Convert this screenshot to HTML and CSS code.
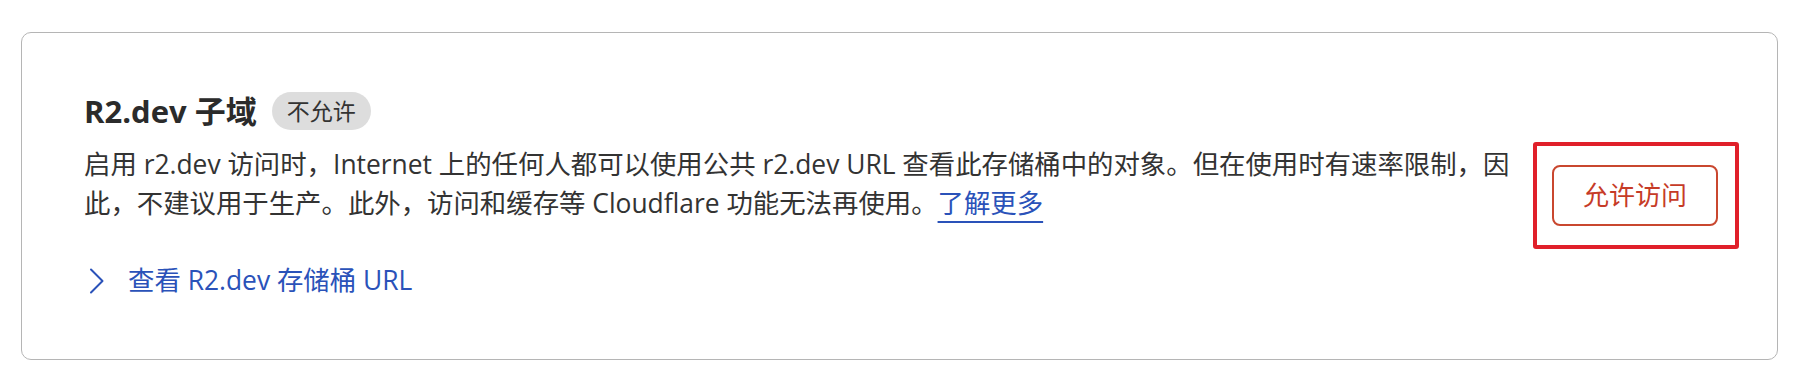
FILE: index.html
```html
<!DOCTYPE html>
<html lang="zh-CN">
<head>
<meta charset="utf-8">
<title>R2.dev 子域</title>
<link rel="stylesheet" href="styles.css">
</head>
<body>
<div class="page">
  <section class="card">
    <div class="info">
      <div class="title-row">
        <h2 class="title">R2.dev 子域</h2>
        <span class="badge">不允许</span>
      </div>
      <p class="desc">启用 r2.dev 访问时，Internet 上的任何人都可以使用公共 r2.dev URL 查看此存储桶中的对象。但在使用时有速率限制，因此，不建议用于生产。此外，访问和缓存等 Cloudflare 功能无法再使用。<a class="learn" href="#">了解更多</a></p>
      <a class="expander" href="#">
        <svg class="chev" width="18" height="26" viewBox="0 0 18 26" aria-hidden="true"><path d="M3 1.5 L14.5 13 L3 24.5" fill="none" stroke="currentColor" stroke-width="2" stroke-linecap="round" stroke-linejoin="round"/></svg>
        <span>查看 R2.dev 存储桶 URL</span>
      </a>
    </div>
    <div class="highlight">
      <button class="allow-btn" type="button">允许访问</button>
    </div>
  </section>
</div>
</body>
</html>
```
FILE: styles.css
```css
html, body {
  margin: 0;
  padding: 0;
  background: #ffffff;
}

body {
  font-family: "Open Sans", "Noto Sans CJK SC", sans-serif;
  color: #333333;
}

.page {
  padding: 32px 21px 0 21px;
}

.card {
  display: flex;
  align-items: center;
  gap: 12px;
  border: 1px solid #b5b5b5;
  border-radius: 10px;
  padding: 58px 38px 59px 62px;
  background: #ffffff;
}

.info {
  flex: 1;
  min-width: 0;
}

.title-row {
  display: flex;
  align-items: center;
  gap: 15px;
  height: 40px;
}

.title {
  margin: 0;
  font-size: 31px;
  line-height: 40px;
  font-weight: 700;
  color: #2b2b2b;
}

.badge {
  display: inline-block;
  background: #dddddd;
  color: #333333;
  font-size: 23px;
  line-height: 28px;
  padding: 5px 15px;
  border-radius: 19px;
}

.desc {
  margin: 14px 0 0 0;
  font-size: 26.4px;
  line-height: 39px;
  color: #333333;
}

.learn {
  color: #2a52b9;
  text-decoration: underline;
  text-decoration-thickness: 2px;
  text-underline-offset: 8px;
}

.expander {
  display: flex;
  align-items: center;
  gap: 22px;
  margin-top: 38px;
  margin-left: 4px;
  font-size: 26.4px;
  line-height: 39px;
  color: #2a52b9;
  text-decoration: none;
}

.chev {
  display: block;
  flex: none;
}

.highlight {
  flex: none;
  border: 4px solid #e0202a;
  border-radius: 3px;
  padding: 19px 17px 19px 15px;
}

.allow-btn {
  display: block;
  font-family: "Open Sans", "Noto Sans CJK SC", sans-serif;
  font-size: 26px;
  line-height: 39px;
  color: #c63b27;
  background: #ffffff;
  border: 2px solid #c9472f;
  border-radius: 8px;
  padding: 9px 29px;
}
```
